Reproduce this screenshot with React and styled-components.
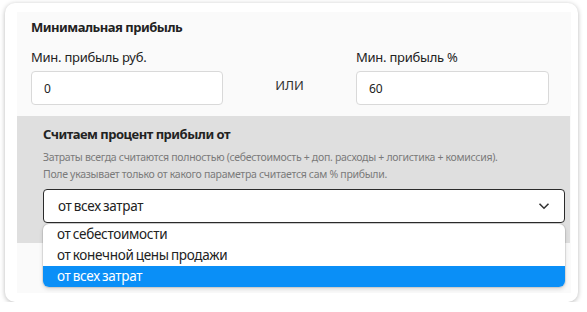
import React from 'react'
import styled, { createGlobalStyle } from 'styled-components'

const GlobalStyle = createGlobalStyle`
    body {
        margin: 0;
        background: #fff;
        font-family: "Noto Sans", "Open Sans", sans-serif;
        color: #222;
    }
`

const options = ['от себестоимости', 'от конечной цены продажи', 'от всех затрат']

export default function App() {
    const selected = 'от всех затрат'

    return (
        <>
            <GlobalStyle />
            <Card>
                <Inner>
                    <Top>
                        <Title>Минимальная прибыль</Title>
                        <Row>
                            <Field width={192}>
                                <Label>Мин. прибыль руб.</Label>
                                <Input defaultValue="0" />
                            </Field>
                            <Or>ИЛИ</Or>
                            <Field width={193}>
                                <Label>Мин. прибыль %</Label>
                                <Input defaultValue="60" />
                            </Field>
                        </Row>
                    </Top>
                    <Basis>
                        <Title>Считаем процент прибыли от</Title>
                        <Hint>
                            Затраты всегда считаются полностью (себестоимость + доп. расходы + логистика + комиссия).
                            <br />
                            Поле указывает только от какого параметра считается сам % прибыли.
                        </Hint>
                        <SelectWrap>
                            <Select>
                                {selected}
                                <svg width="12" height="8" viewBox="0 0 12 8">
                                    <path d="M1.5 1.8 L6 6.2 L10.5 1.8" fill="none" stroke="#333" strokeWidth="1.6" />
                                </svg>
                            </Select>
                            <Menu>
                                {options.map(item => (
                                    <Option key={item} active={item === selected}>{item}</Option>
                                ))}
                            </Menu>
                        </SelectWrap>
                    </Basis>
                </Inner>
            </Card>
        </>
    )
}

const Card = styled.div`
    margin: 3px 0 0 5px;
    width: 573px;
    height: 299px;
    box-sizing: border-box;
    padding: 9px 7px 9px 12px;
    background: #fff;
    border-radius: 10px;
    box-shadow: 0 1px 5px rgba(0, 0, 0, 0.28);
`

const Inner = styled.div`
    height: 100%;
    background: #fafafa;
`

const Top = styled.div`
    padding: 6px 22px 0 14px;
`

const Title = styled.div`
    font-size: 13px;
    font-weight: 700;
    line-height: 18px;
    color: #222;
    letter-spacing: -0.5px;
`

const Row = styled.div`
    display: flex;
    margin-top: 12px;
`

const Field = styled.div`
    width: ${p => p.width}px;
    display: flex;
    flex-direction: column;
    gap: 5px;
`

const Label = styled.div`
    font-size: 13px;
    line-height: 18px;
    color: #222;
    letter-spacing: -0.25px;
`

const Input = styled.input`
    box-sizing: border-box;
    height: 34px;
    width: 100%;
    border: 1px solid #d9d9d9;
    border-radius: 4px;
    background: #fff;
    padding: 0 12px;
    font-family: inherit;
    font-size: 12px;
    color: #222;
    outline: none;
`

const Or = styled.div`
    flex: 1;
    align-self: flex-end;
    height: 34px;
    line-height: 28px;
    text-align: center;
    font-size: 13px;
    color: #333;
`

const Basis = styled.div`
    margin-top: 11px;
    margin-right: 1px;
    height: 127px;
    box-sizing: border-box;
    padding: 9px 5px 0 26px;
    background: #dfdfdf;
`

const Hint = styled.div`
    margin-top: 6px;
    font-size: 10.5px;
    line-height: 17px;
    color: #7a7a7a;
    letter-spacing: -0.3px;
`

const SelectWrap = styled.div`
    position: relative;
    margin-top: 6px;
`

const Select = styled.div`
    box-sizing: border-box;
    height: 34px;
    display: flex;
    align-items: center;
    justify-content: space-between;
    padding: 0 14px 0 14px;
    background: #fff;
    border: 1px solid #2b2b2b;
    border-radius: 4px;
    font-size: 13.5px;
    color: #222;
    letter-spacing: -0.3px;
    word-spacing: -1px;
`

const Menu = styled.div`
    position: absolute;
    top: 35px;
    left: 0;
    right: 0;
    background: #fff;
    border-radius: 6px;
    overflow: hidden;
    box-shadow: 0 0 0 1px rgba(0, 0, 0, 0.08), 0 2px 4px rgba(0, 0, 0, 0.15);
`

const Option = styled.div`
    height: 21px;
    line-height: 21px;
    padding: 0 14px;
    font-size: 13.5px;
    letter-spacing: -0.3px;
    word-spacing: -1px;
    color: ${p => p.active ? '#fff' : '#222'};
    background: ${p => p.active ? '#0a8ff7' : 'transparent'};
`
